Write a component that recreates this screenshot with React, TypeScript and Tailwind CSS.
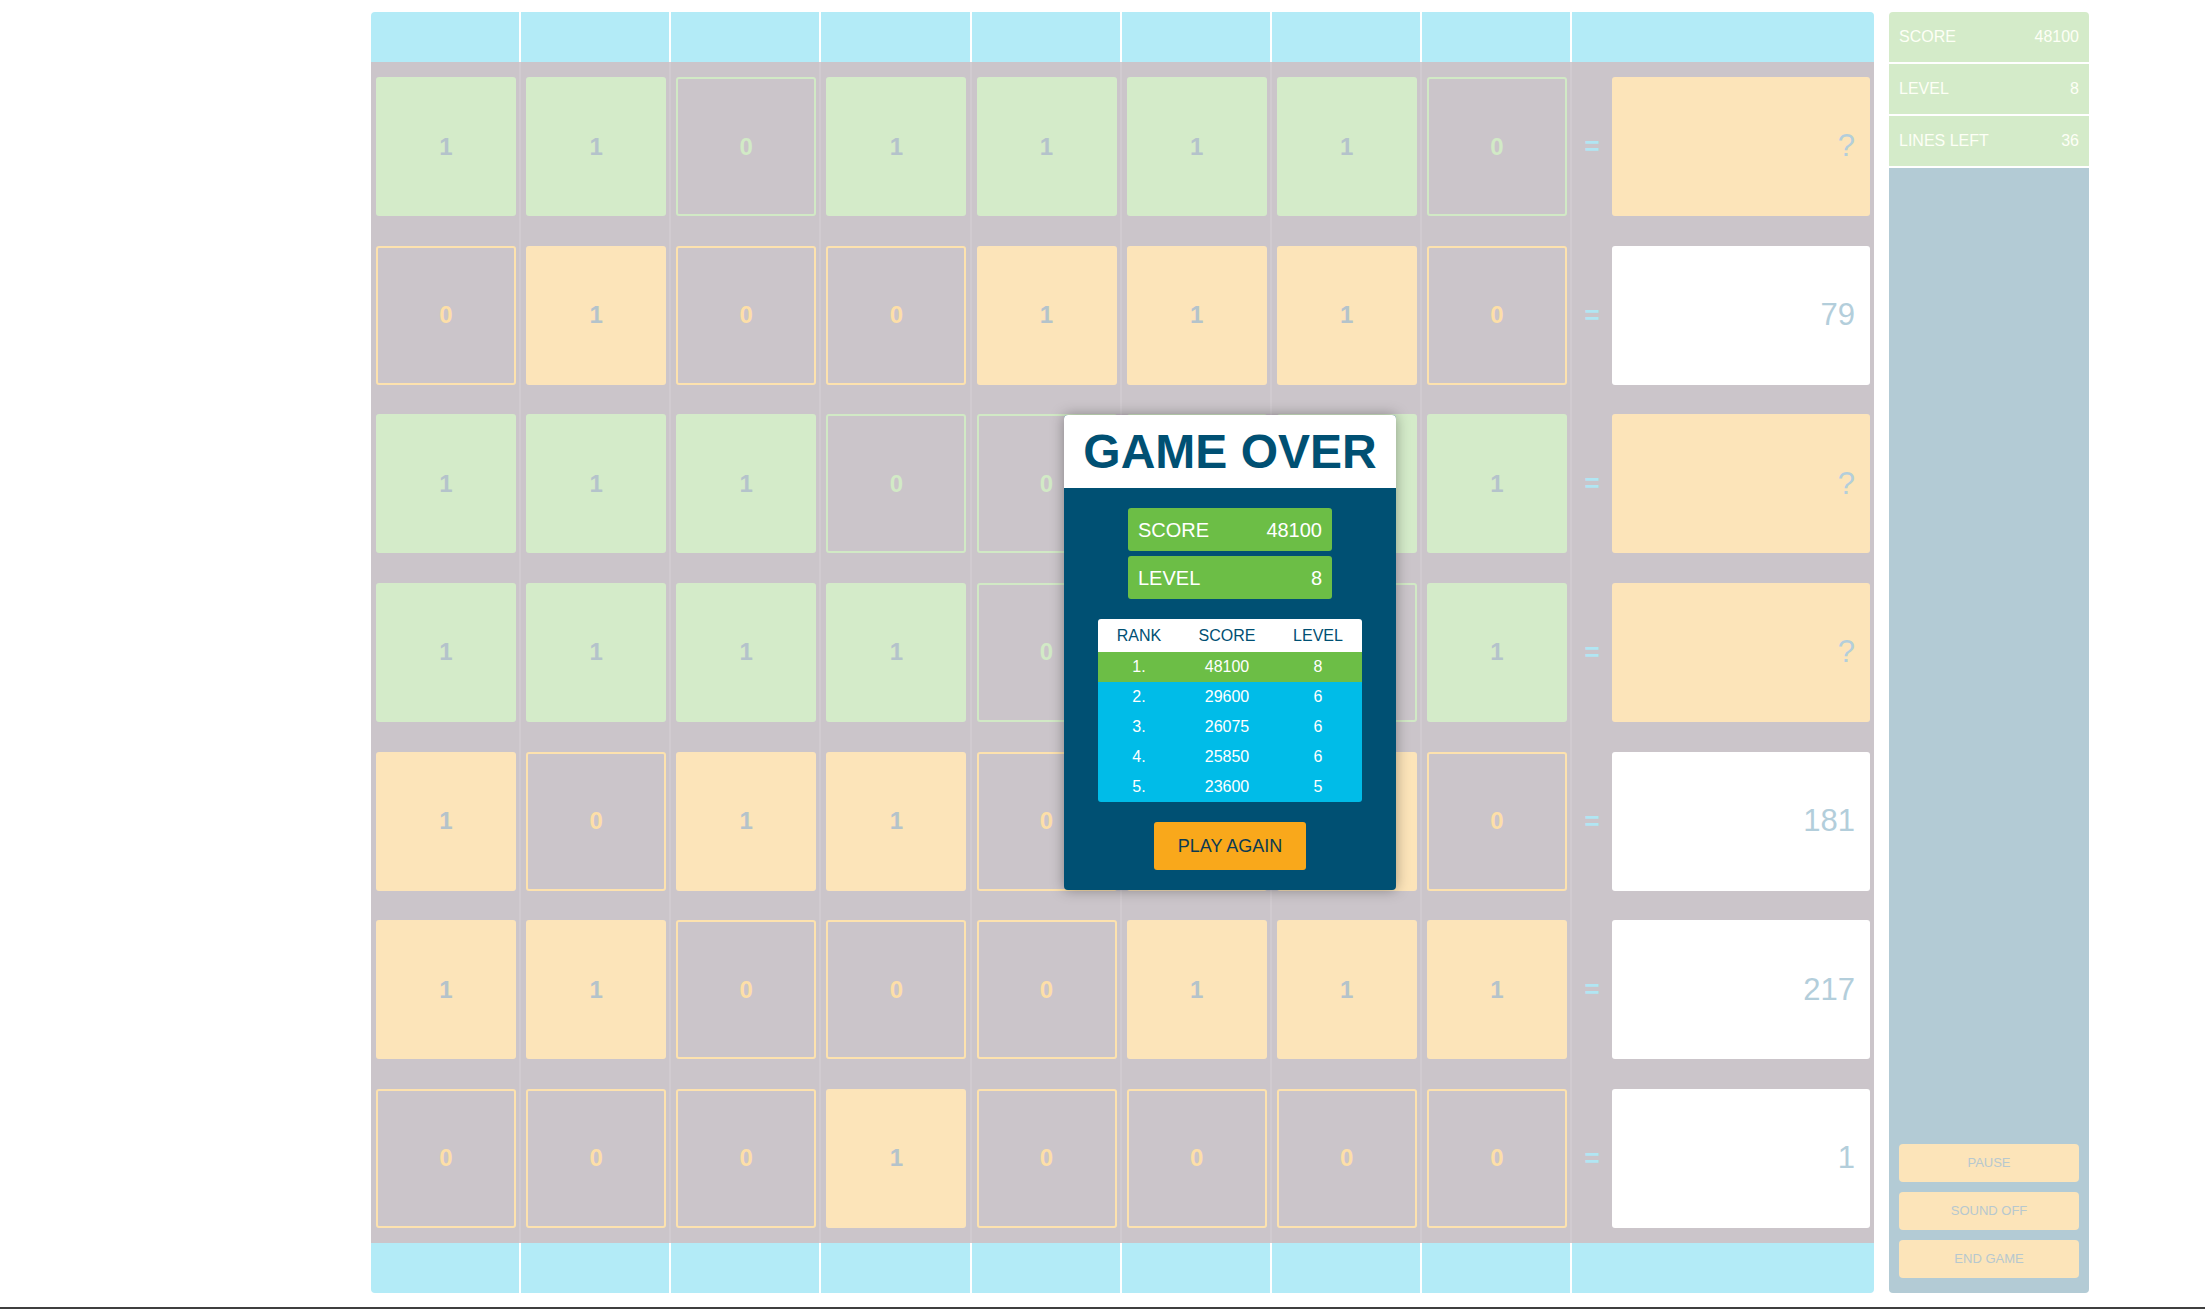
import React from "react";

type Row = { type: "g" | "o"; bits: number[]; result: string };

const rows: Row[] = [
  { type: "g", bits: [1, 1, 0, 1, 1, 1, 1, 0], result: "?" },
  { type: "o", bits: [0, 1, 0, 0, 1, 1, 1, 0], result: "79" },
  { type: "g", bits: [1, 1, 1, 0, 0, 0, 1, 1], result: "?" },
  { type: "g", bits: [1, 1, 1, 1, 0, 1, 0, 1], result: "?" },
  { type: "o", bits: [1, 0, 1, 1, 0, 1, 1, 0], result: "181" },
  { type: "o", bits: [1, 1, 0, 0, 0, 1, 1, 1], result: "217" },
  { type: "o", bits: [0, 0, 0, 1, 0, 0, 0, 0], result: "1" },
];

const ranks = [
  { r: "1.", s: "48100", l: "8", hi: true },
  { r: "2.", s: "29600", l: "6", hi: false },
  { r: "3.", s: "26075", l: "6", hi: false },
  { r: "4.", s: "25850", l: "6", hi: false },
  { r: "5.", s: "23600", l: "5", hi: false },
];

function Cell({ type, bit }: { type: "g" | "o"; bit: number }) {
  let cls = "";
  if (bit === 1) {
    cls = type === "g" ? "bg-[#d4ebc9] text-[#b4c3cb]" : "bg-[#fce4b9] text-[#b4c3cb]";
  } else {
    cls =
      type === "g"
        ? "border-2 border-[#d1e9c5] text-[#d2eac6]"
        : "border-2 border-[#fde2ae] text-[#fddfa8]";
  }
  return (
    <div
      className={`w-[140px] h-[139px] rounded-[3px] flex items-center justify-center text-[24px] font-bold ${cls}`}
    >
      {bit}
    </div>
  );
}

export default function App() {
  const font = { fontFamily: '"Liberation Sans", Arial, sans-serif' };
  return (
    <div className="relative w-[2205px] h-[1309px] bg-white overflow-hidden" style={font}>
      <div className="flex pl-[371px] pt-[12px]">
        {/* Board */}
        <div className="flex w-[1503px] h-[1281px] rounded-[4px] overflow-hidden">
          {Array.from({ length: 8 }).map((_, c) => (
            <div key={c} className="flex flex-col w-[150.125px] shrink-0">
              <div className="h-[50px] bg-[#b3ebf7] border-r-2 border-white" />
              <div className="flex-1 bg-[#cbc5ca] border-r-2 border-[#d1cbd0] pl-[5px] py-[15px] flex flex-col justify-between">
                {rows.map((row, r) => (
                  <Cell key={r} type={row.type} bit={row.bits[c]} />
                ))}
              </div>
              <div className="h-[50px] bg-[#b3ebf7] border-r-2 border-white" />
            </div>
          ))}
          <div className="flex flex-col flex-1">
            <div className="h-[50px] bg-[#b3ebf7]" />
            <div className="flex-1 bg-[#cbc5ca] py-[15px] flex flex-col justify-between">
              {rows.map((row, r) => (
                <div key={r} className="flex h-[139px] items-center">
                  <div className="w-[40px] text-center text-[26px] font-bold text-[#b1e6f3]">=</div>
                  <div
                    className={`w-[258px] h-[139px] rounded-[3px] flex items-center justify-end pr-[15px] text-[31px] text-[#b3cedb] ${
                      row.type === "g" ? "bg-[#fce4b9]" : "bg-white"
                    }`}
                  >
                    {row.result}
                  </div>
                </div>
              ))}
            </div>
            <div className="h-[50px] bg-[#b3ebf7]" />
          </div>
        </div>

        {/* Sidebar */}
        <div className="ml-[15px] w-[200px] h-[1281px] flex flex-col gap-[2px] rounded-[4px] overflow-hidden">
          {[
            ["SCORE", "48100"],
            ["LEVEL", "8"],
            ["LINES LEFT", "36"],
          ].map(([k, v]) => (
            <div
              key={k}
              className="h-[50px] bg-[#d4ebc9] flex items-center justify-between px-[10px] text-[16px] text-[#fdfff6]"
            >
              <span>{k}</span>
              <span>{v}</span>
            </div>
          ))}
          <div className="flex-1 bg-[#b3cbd5] flex flex-col justify-end gap-[10px] px-[10px] pb-[15px]">
            {["PAUSE", "SOUND OFF", "END GAME"].map((b) => (
              <div
                key={b}
                className="h-[38px] rounded-[4px] bg-[#fce4b9] flex items-center justify-center text-[13px] text-[#b7c8cf]"
              >
                {b}
              </div>
            ))}
          </div>
        </div>
      </div>

      <div className="mt-[14px] h-[2px] bg-[#3f3f3f]" />

      {/* Modal */}
      <div className="absolute left-[1064px] top-[415px] w-[332px] h-[475px] rounded-[4px] overflow-hidden bg-[#005073] shadow-[0_0_14px_rgba(0,0,0,0.35)] flex flex-col">
        <div className="h-[73px] bg-white flex items-center justify-center text-[48px] font-bold text-[#005073]">
          GAME OVER
        </div>
        <div className="flex flex-col items-center pt-[20px]">
          <div className="w-[204px] h-[43px] rounded-[3px] bg-[#6cbe46] flex items-center justify-between px-[10px] text-[20px] text-white">
            <span>SCORE</span>
            <span>48100</span>
          </div>
          <div className="mt-[5px] w-[204px] h-[43px] rounded-[3px] bg-[#6cbe46] flex items-center justify-between px-[10px] text-[20px] text-white">
            <span>LEVEL</span>
            <span>8</span>
          </div>
          <div className="mt-[20px] w-[264px] rounded-[3px] overflow-hidden text-[16px]">
            <div className="h-[33px] bg-white flex items-center text-[#005073]">
              <div className="w-[82px] text-center">RANK</div>
              <div className="w-[94px] text-center">SCORE</div>
              <div className="w-[88px] text-center">LEVEL</div>
            </div>
            {ranks.map((r) => (
              <div
                key={r.r}
                className={`h-[30px] flex items-center text-white ${r.hi ? "bg-[#6cbe46]" : "bg-[#00bce8]"}`}
              >
                <div className="w-[82px] text-center">{r.r}</div>
                <div className="w-[94px] text-center">{r.s}</div>
                <div className="w-[88px] text-center">{r.l}</div>
              </div>
            ))}
          </div>
          <div className="mt-[20px] w-[152px] h-[48px] rounded-[3px] bg-[#f9a81b] flex items-center justify-center text-[18px] text-[#0b3a52]">
            PLAY AGAIN
          </div>
        </div>
      </div>
    </div>
  );
}
